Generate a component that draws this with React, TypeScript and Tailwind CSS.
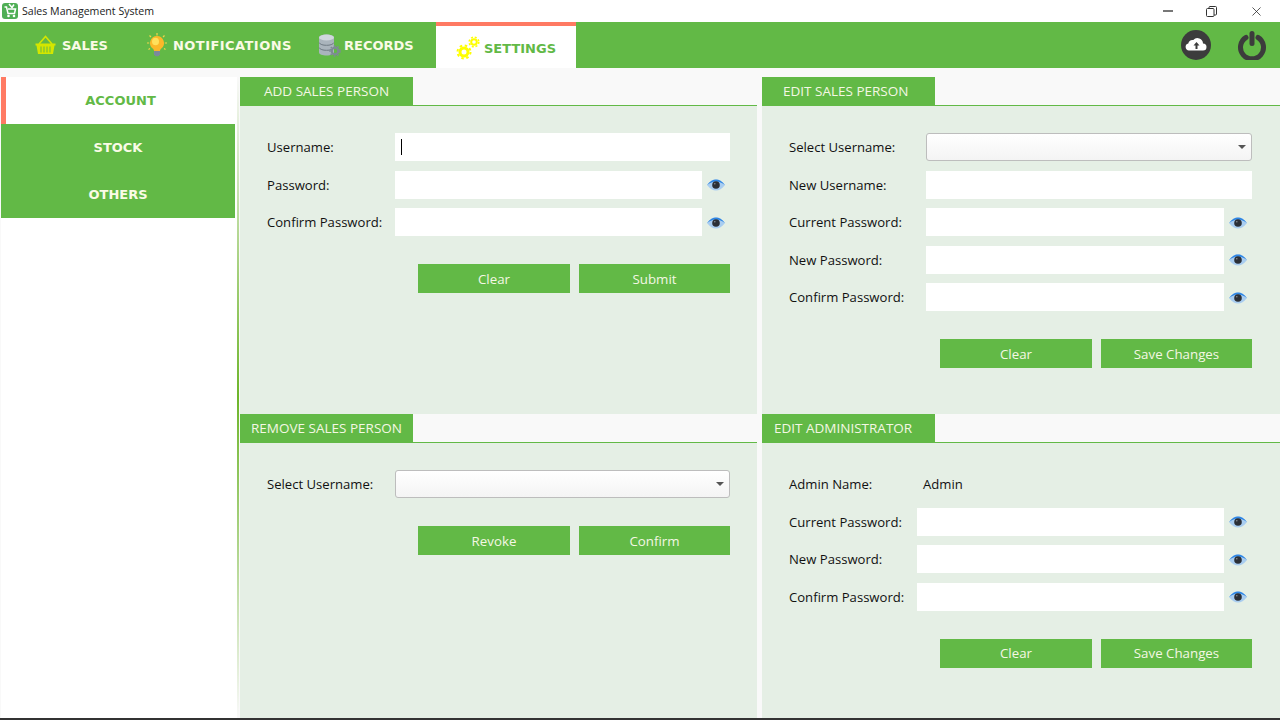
import { X } from 'lucide-react';

const GREEN = 'bg-[#62b946]';

function Eye() {
  return (
    <svg width="20" height="14" viewBox="0 0 20 14" className="mt-px shrink-0">
      <path d="M1 7C4 3 7 1.500 10 1.500S16 3 19 7C16 11 13 12.500 10 12.500S4 11 1 7Z" fill="#a9cdf0" />
      <path d="M1 7C4 3 7 1.500 10 1.500S16 3 19 7C16 4.600 13 3.400 10 3.400S4 4.600 1 7Z" fill="#2f86e4" />
      <circle cx="10" cy="7" r="3.800" fill="#2b2f36" />
      <circle cx="8.800" cy="5.800" r="0.800" fill="#8a8f96" />
    </svg>
  );
}

function Basket() {
  return (
    <svg width="21" height="20" viewBox="0 0 21 20" fill="none" className="shrink-0">
      <path d="M4 9 10.500 1.500 17 9" stroke="#d4e600" strokeWidth="1.600" />
      <path d="M.5 8.500h20v2h-1l-1.500 8.500H3L1.500 10.500h-1Z" fill="#d4e600" />
      <path d="M6 11.500v6M9 11.500v6M12 11.500v6M15 11.500v6" stroke="#62b946" strokeWidth="1" />
    </svg>
  );
}

function Bulb() {
  return (
    <svg width="20" height="24" viewBox="0 0 20 24" fill="none" className="shrink-0">
      <path d="M10 0v2.500M2.500 2.500l1.500 1.500M17.500 2.500 16 4M0 10h2.200M17.800 10H20M1.500 16.500l1.500-1M18.500 16.500l-1.500-1" stroke="#f0d54a" strokeWidth="1.200" />
      <path d="M10 3a7 7 0 0 1 4.300 12.500c-.8.7-1.300 1.500-1.300 2.500H7c0-1-.5-1.800-1.300-2.500A7 7 0 0 1 10 3Z" fill="#fbb829" />
      <ellipse cx="8.500" cy="8.500" rx="3.500" ry="3.800" fill="#ffe15c" />
      <path d="M7 18h6v3.500l-1.500 1.800h-3L7 21.500Z" fill="#7b8a9c" />
    </svg>
  );
}

function Database() {
  return (
    <svg width="23" height="23" viewBox="0 0 23 23" className="shrink-0">
      <path d="M1 3.500C1 1.500 4.500.5 8.500.5S16 1.500 16 3.500v15c0 2-3.500 3-7.500 3S1 20.500 1 18.500Z" fill="#aab4bc" />
      <ellipse cx="8.500" cy="3.500" rx="7.500" ry="3" fill="#d0d7dc" />
      <path d="M1 8.500c1 2 4 2.800 7.500 2.800S15 10.500 16 8.500M1 13.500c1 2 4 2.800 7.500 2.800S15 15.500 16 13.500" fill="none" stroke="#6f7a83" strokeWidth="1" />
      <circle cx="17" cy="17" r="3.300" fill="none" stroke="#7d8a94" strokeWidth="2.200" />
      <circle cx="17" cy="17" r="5" fill="none" stroke="#7d8a94" strokeWidth="1.400" strokeDasharray="1.800 1.800" />
    </svg>
  );
}

function Gears() {
  return (
    <svg width="24" height="24" viewBox="0 0 24 24" fill="none" className="mt-px shrink-0">
      <circle cx="8" cy="16" r="4" stroke="#ffff00" strokeWidth="3" />
      <circle cx="8" cy="16" r="6.500" stroke="#ffff00" strokeWidth="2" strokeDasharray="2.500 2.600" />
      <circle cx="18" cy="6" r="2.800" stroke="#ffff00" strokeWidth="2" />
      <circle cx="18" cy="6" r="4.800" stroke="#ffff00" strokeWidth="1.600" strokeDasharray="2 1.800" />
    </svg>
  );
}

function CloudUpload() {
  return (
    <svg width="30" height="30" viewBox="0 0 30 30" className="shrink-0">
      <circle cx="15" cy="15" r="15" fill="#3c3c3c" />
      <path d="M8 20.500a3.500 3.500 0 0 1-.7-6.900 4.500 4.500 0 0 1 5-3.500 5.500 5.500 0 0 1 9.700 3.400 3.500 3.500 0 0 1 0 7Z" fill="#fff" />
      <path d="M15.500 12l-3 3.500h2v3.500h2v-3.500h2Z" fill="#3c3c3c" />
    </svg>
  );
}

function Power() {
  return (
    <svg width="30" height="30" viewBox="0 0 30 30" fill="none" className="shrink-0">
      <path d="M9 7.500a11.500 11.500 0 1 0 12 0" stroke="#3c3c3c" strokeWidth="5" strokeLinecap="round" />
      <path d="M15 3.500v10" stroke="#3c3c3c" strokeWidth="5" strokeLinecap="round" />
    </svg>
  );
}

function AppLogo() {
  return (
    <svg width="16" height="16" viewBox="0 0 16 16" className="shrink-0">
      <rect width="16" height="16" rx="3" fill="#4fae55" />
      <path d="M2.500 4h2l1.500 6.500h6.500l1-4.500H6" fill="none" stroke="#fff" strokeWidth="1.500" />
      <path d="M7 1l3 3.500L12 1.500" fill="none" stroke="#fff" strokeWidth="1.500" />
      <circle cx="6.500" cy="13" r="1.300" fill="#fff" />
      <circle cx="12" cy="13" r="1.300" fill="#fff" />
    </svg>
  );
}

function RestoreIcon() {
  return (
    <svg width="11" height="11" viewBox="0 0 11 11" fill="none" stroke="#333" strokeWidth="1">
      <rect x="0.500" y="2.500" width="7.500" height="8" rx="1" />
      <path d="M3 2.500V1.500a1 1 0 0 1 1-1h5.500a1 1 0 0 1 1 1V8a1 1 0 0 1-1 1H8" />
    </svg>
  );
}

function Field({ label, col, eye, select }: { label: string; col: string; eye?: boolean; select?: boolean }) {
  return (
    <div className="flex h-7 items-center">
      <label className={`${col} shrink-0 pt-[2px] text-[13.1px] text-[#111]`}>{label}</label>
      {select ? (
        <div className="flex h-7 flex-1 items-center justify-end rounded-[3px] border border-[#bdbdbd] bg-gradient-to-b from-white to-[#f4f4f4] pr-[5px]">
          <div className="h-0 w-0 border-x-[4px] border-t-[4px] border-x-transparent border-t-[#555]" />
        </div>
      ) : (
        <div className="h-7 flex-1 bg-white" />
      )}
      {eye && (
        <div className="flex w-[28px] shrink-0 justify-end pr-[4px]">
          <Eye />
        </div>
      )}
    </div>
  );
}

function Buttons({ left, right }: { left: string; right: string }) {
  return (
    <div className="flex justify-end gap-[9px]">
      <button className={`h-[29px] w-[152px] ${GREEN} pt-[2px] text-[13.3px] text-[#f4f7e4]`}>{left}</button>
      <button className={`h-[29px] w-[151px] ${GREEN} pt-[2px] text-[13.3px] text-[#f4f7e4]`}>{right}</button>
    </div>
  );
}

function Panel({ title, titleClass, padRight, children }: { title: string; titleClass: string; padRight: string; children: React.ReactNode }) {
  return (
    <section className="flex flex-col">
      <div className="flex h-[29px] shrink-0 border-b border-[#62b946]">
        <div className={`flex h-7 w-[173px] items-center whitespace-nowrap ${titleClass} ${GREEN} text-[13.5px] text-[#f4f7e4]`}>{title}</div>
      </div>
      <div className={`flex flex-1 flex-col bg-[#e5efe5] pt-[27px] pl-[27px] ${padRight}`}>{children}</div>
    </section>
  );
}

export default function App() {
  return (
    <div className="flex h-[720px] w-[1280px] flex-col overflow-hidden bg-[#f9f9f9] font-['Open_Sans','Noto_Sans',sans-serif]">
      {/* title bar */}
      <div className="flex h-[22px] shrink-0 items-center bg-white pl-[2px] text-[#222]">
        <AppLogo />
        <span className="ml-[4px] pt-px text-[10.6px]">Sales Management System</span>
        <div className="ml-auto flex items-center">
          <div className="mr-[33px] h-[2px] w-[10px] bg-[#777]" />
          <RestoreIcon />
          <X size={15} strokeWidth={1.200} className="mr-[16px] ml-[32px]" />
        </div>
      </div>

      {/* tabs */}
      <nav className={`flex h-[46px] shrink-0 ${GREEN} pl-[35px] font-['DejaVu_Sans',sans-serif] text-[13px] font-bold text-[#fafbe6]`}>
        <div className="flex w-[112px] items-center gap-[6px]">
          <Basket />
          <span className="pt-[2px]">SALES</span>
        </div>
        <div className="flex w-[171px] items-center gap-[6px]">
          <Bulb />
          <span className="pt-[2px] tracking-[0.45px]">NOTIFICATIONS</span>
        </div>
        <div className="flex w-[118px] items-center gap-[3px]">
          <Database />
          <span className="pt-[2px]">RECORDS</span>
        </div>
        <div className="flex w-[140px] items-center gap-[4px] border-t-4 border-[#ff7a63] bg-white pl-[20px] text-[#62b946]">
          <Gears />
          <span className="pt-[4px]">SETTINGS</span>
        </div>
        <div className="ml-auto flex items-center gap-[26px] pr-[13px]">
          <CloudUpload />
          <Power />
        </div>
      </nav>

      {/* body */}
      <div className="flex min-h-0 flex-1 pt-[9px]">
        <aside className="ml-px h-[641px] w-[236px] shrink-0 bg-white font-['DejaVu_Sans',sans-serif] text-[13px] font-bold">
          <div className="flex h-[47px] w-[234px] items-center justify-center border-l-[5px] border-[#ff7a63] pt-px text-[#62b946]">ACCOUNT</div>
          <div className={`flex h-[47px] w-[234px] items-center justify-center ${GREEN} pt-px text-[#fafbe6]`}>STOCK</div>
          <div className={`flex h-[47px] w-[234px] items-center justify-center ${GREEN} pt-px text-[#fafbe6]`}>OTHERS</div>
        </aside>
        <div className="h-[641px] w-[2px] shrink-0 bg-gradient-to-b from-transparent via-[#6db52a] to-transparent" />
        <div className="w-px shrink-0" />

        <div className="grid h-[641px] flex-1 grid-cols-[517px_518px] grid-rows-[337px_304px] gap-x-[5px]">
          <Panel title="ADD SALES PERSON" titleClass="pl-[24px]" padRight="pr-[27px]">
            <div className="flex flex-col gap-[9.500px]">
              <div className="relative">
                <Field label="Username:" col="w-[128px]" />
                <div className="absolute top-[6px] left-[134px] h-[16px] w-px bg-black" />
              </div>
              <Field label="Password:" col="w-[128px]" eye />
              <Field label="Confirm Password:" col="w-[128px]" eye />
            </div>
            <div className="mt-[28px]">
              <Buttons left="Clear" right="Submit" />
            </div>
          </Panel>

          <Panel title="EDIT SALES PERSON" titleClass="pl-[21px]" padRight="pr-[28px]">
            <div className="flex flex-col gap-[9.500px]">
              <Field label="Select Username:" col="w-[137px]" select />
              <Field label="New Username:" col="w-[137px]" />
              <Field label="Current Password:" col="w-[137px]" eye />
              <Field label="New Password:" col="w-[137px]" eye />
              <Field label="Confirm Password:" col="w-[137px]" eye />
            </div>
            <div className="mt-[28px]">
              <Buttons left="Clear" right="Save Changes" />
            </div>
          </Panel>

          <Panel title="REMOVE SALES PERSON" titleClass="pl-[11px]" padRight="pr-[27px]">
            <Field label="Select Username:" col="w-[128px]" select />
            <div className="mt-[28px]">
              <Buttons left="Revoke" right="Confirm" />
            </div>
          </Panel>

          <Panel title="EDIT ADMINISTRATOR" titleClass="pl-[12px]" padRight="pr-[28px]">
            <div className="flex flex-col gap-[9.500px]">
              <div className="flex h-7 items-center pt-px text-[13.1px] text-[#111]">
                <span className="w-[134px]">Admin Name:</span>
                <span>Admin</span>
              </div>
              <Field label="Current Password:" col="w-[128px]" eye />
              <Field label="New Password:" col="w-[128px]" eye />
              <Field label="Confirm Password:" col="w-[128px]" eye />
            </div>
            <div className="mt-[28px]">
              <Buttons left="Clear" right="Save Changes" />
            </div>
          </Panel>
        </div>
      </div>

      <div className="h-[2px] shrink-0 bg-[#333]" />
    </div>
  );
}
